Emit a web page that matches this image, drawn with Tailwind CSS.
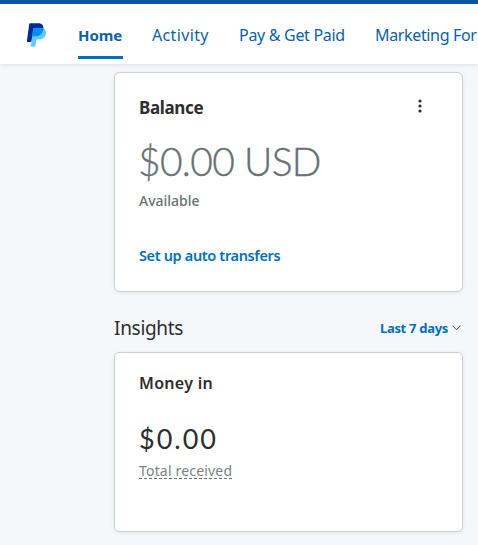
<!DOCTYPE html>
<html lang="en">
<head>
<meta charset="utf-8">
<title>Dashboard</title>
<script src="https://cdn.jsdelivr.net/npm/@tailwindcss/browser@4"></script>
</head>
<body class="h-[545px] w-[478px] overflow-hidden bg-[#f5f7fb] font-['Noto_Sans','Open_Sans',sans-serif] text-[#2c2e2f] whitespace-nowrap">
<header class="relative h-16 border-t-4 border-[#0357a6] bg-white shadow-[0_1px_4px_rgba(0,0,0,0.10)]">
  <nav class="flex h-[55px] items-stretch pl-[26px] text-base text-[#0d5fa6]">
    <a class="mt-[19px] mr-[31px] block w-[21px] shrink-0" aria-label="PayPal">
      <svg width="21" height="25" viewBox="0 0 21 25">
        <path d="M4.200.3H12c4.400 0 6 2.700 5.300 6.200C16.500 11 13.600 13.300 9.500 13.300H7.300c-.6 0-.9.400-1 .9L5.600 18.300c-.1.500-.4.700-.9.700H1.500c-.5 0-.7-.3-.6-.8L3.200 1.200C3.300.6 3.600.3 4.200.3z" fill="#002991"/>
        <path d="M17.300 5.200c2.400 1.200 3.200 3.200 2.700 5.600-.8 4.200-3.600 5.800-7.200 5.800h-1.400c-.6 0-1 .4-1.100 1l-.8 5.200c-.1.600-.5.900-1.100.9H5.300c-.5 0-.7-.3-.6-.7L7.200 6.300c.1-.7.6-1.100 1.300-1.100z" fill="#60cdff"/>
        <path d="M8.500 5.200h8.800c.2 4.800-3.300 8.100-7.800 8.100H7.300c-.6 0-.9.400-1.100.9l1-7.900c.1-.7.6-1.100 1.300-1.100z" fill="#008cff"/>
      </svg>
    </a>
    <a class="mr-[29px] w-[45px] shrink-0 border-b-[3px] border-[#0070ba] pt-[19px] text-[15px] leading-6 font-bold tracking-[-0.1px]">Home</a>
    <a class="mr-[30px] w-[57px] shrink-0 pt-[19px] leading-6 tracking-[0.35px]">Activity</a>
    <a class="mr-[30px] w-[106px] shrink-0 pt-[19px] leading-6 tracking-[-0.3px]">Pay &amp; Get Paid</a>
    <a class="shrink-0 pt-[19px] leading-6 tracking-[-0.35px]">Marketing For</a>
  </nav>
</header>
<main class="pt-2 pl-[114px]">
  <section class="h-[220px] w-[349px] rounded-md border border-[#c9cfd3] bg-white pt-[23px] pl-6 shadow-[0_1px_4px_rgba(0,0,0,0.08)]">
    <div class="flex h-6 justify-between pr-10">
      <h2 class="text-[17px] leading-6 font-bold tracking-[-0.35px]">Balance</h2>
      <svg class="mt-[3px]" width="4" height="14" viewBox="0 0 4 14" fill="#2c2e2f"><circle cx="2" cy="2" r="1.600"/><circle cx="2" cy="7" r="1.600"/><circle cx="2" cy="12" r="1.600"/></svg>
    </div>
    <p class="mt-[17px] -ml-px h-12 font-['Lato',sans-serif] text-[39px] leading-[48px] font-light tracking-[-0.7px] text-[#687173] [-webkit-text-stroke:0.4px_#687173]">$0.00 USD</p>
    <p class="mt-1.5 h-5 text-sm leading-5 font-medium text-[#687173]">Available</p>
    <p class="mt-[34px] h-5 text-[14.5px] leading-5 font-semibold tracking-[-0.35px] text-[#0070ba]">Set up auto transfers</p>
  </section>
  <div class="flex h-[60px] w-[349px] items-start justify-between pt-[22px]">
    <h2 class="text-[19px] leading-7 tracking-[-0.3px]">Insights</h2>
    <div class="flex items-center pt-1 pr-0.5">
      <span class="mr-1 text-[13px] leading-5 font-bold tracking-[-0.3px] text-[#0070ba]">Last 7 days</span>
      <svg width="9" height="6" viewBox="0 0 9 6" fill="none" stroke="#4a4f58"><path d="M.5.7 4.500 4.700 8.500.7"/></svg>
    </div>
  </div>
  <section class="h-[180px] w-[349px] rounded-[5px] border border-[#c9cfd3] bg-white pt-[18px] pl-6 shadow-[0_1px_4px_rgba(0,0,0,0.08)]">
    <h3 class="h-6 text-base leading-6 font-semibold tracking-[0.3px]">Money in</h3>
    <p class="mt-[26px] h-9 font-['Lato',sans-serif] text-[27px] leading-9 tracking-[2px]">$0.00</p>
    <p class="mt-[3px] inline-block h-[19px] w-[93px] border-b border-dashed border-[#687173] text-sm leading-[21px] tracking-[0.18px] text-[#7b8385]">Total received</p>
  </section>
</main>
</body>
</html>
